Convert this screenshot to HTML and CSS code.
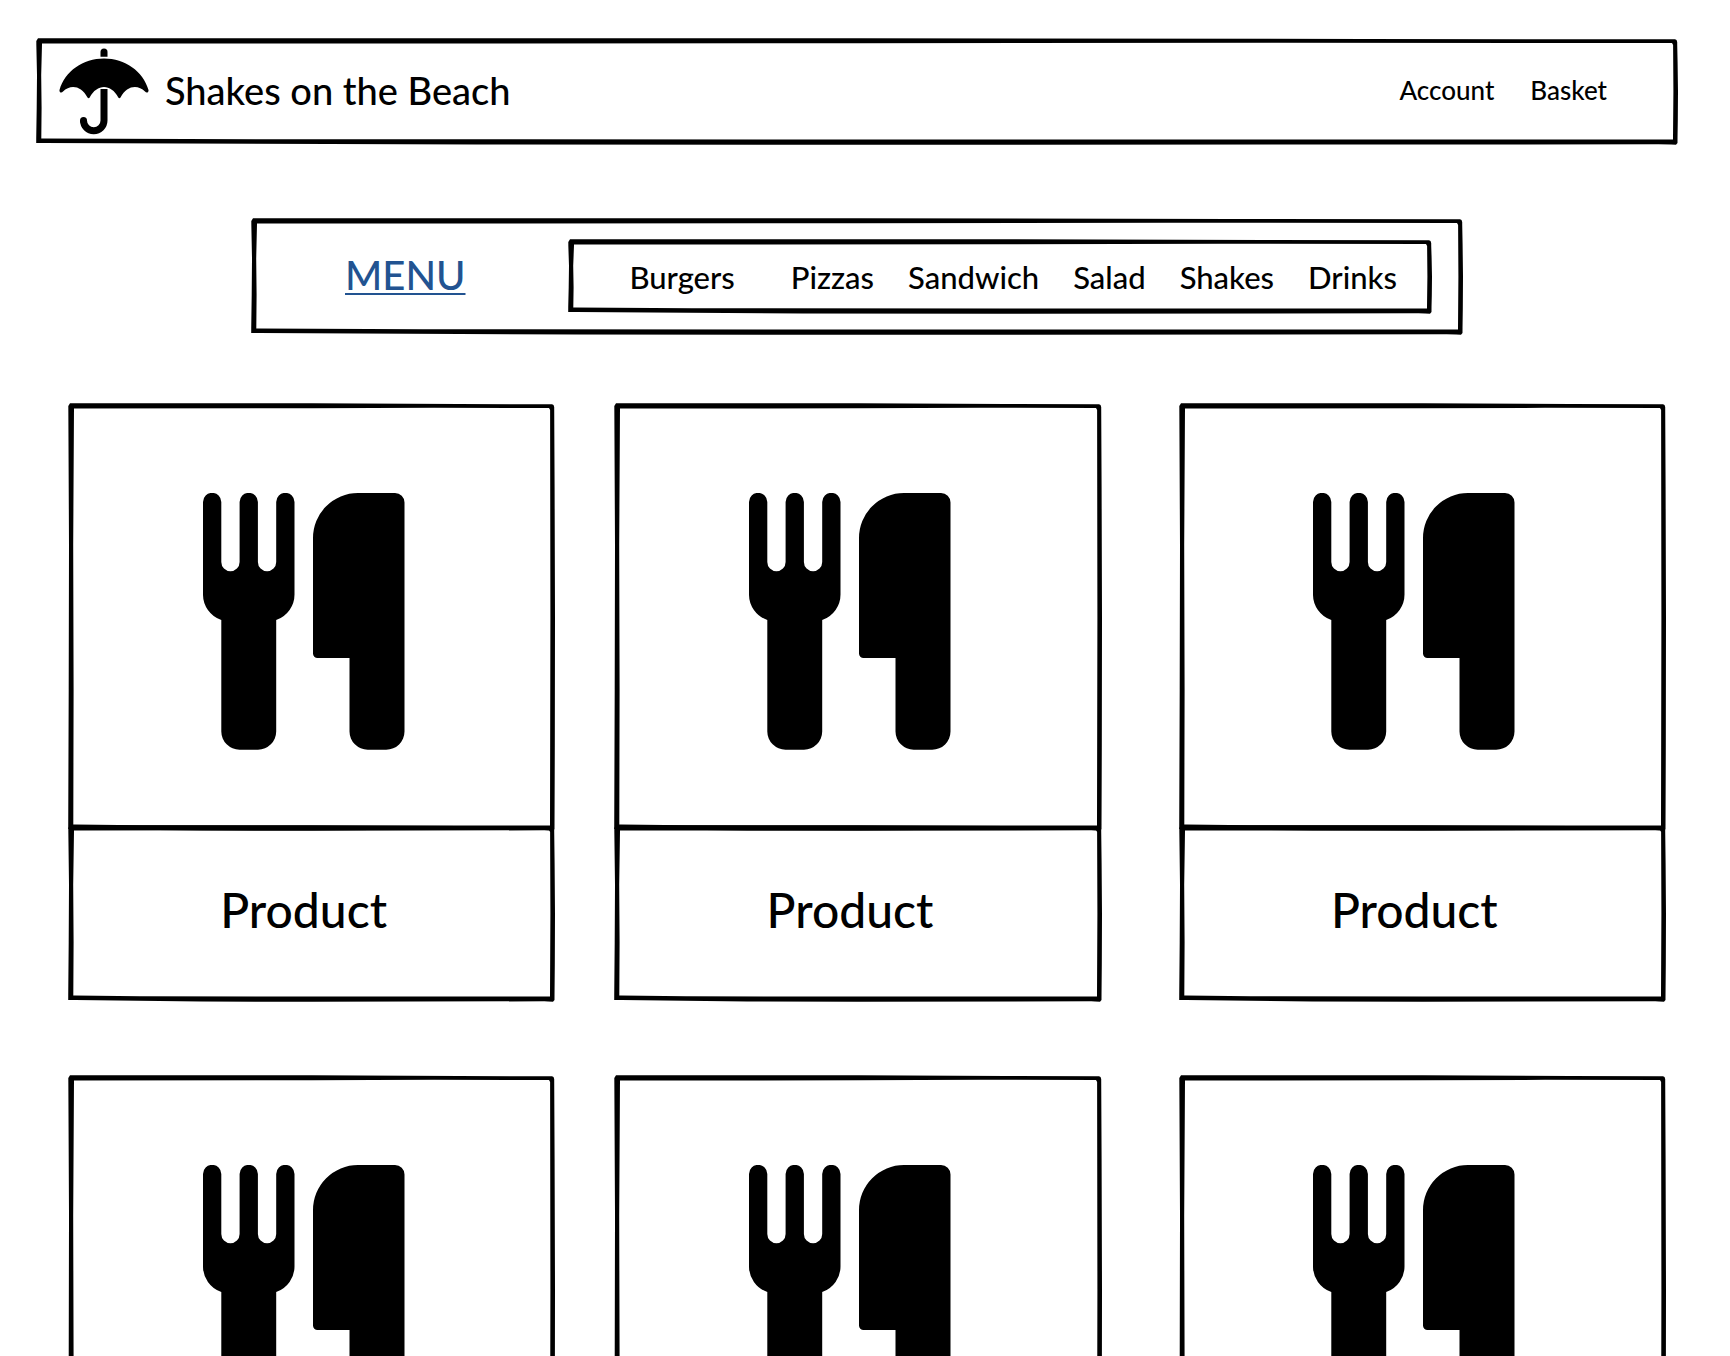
FILE: index.html
```html
<!DOCTYPE html>
<html lang="en">
<head>
<meta charset="utf-8">
<meta name="viewport" content="width=device-width, initial-scale=1">
<title>Shakes on the Beach</title>
<link rel="stylesheet" href="styles.css">
</head>
<body>
<svg class="sprite" aria-hidden="true">
  <symbol id="cutlery" viewBox="0 0 202 257">
    <path d="M0 9a9 9 0 0 1 18.300 0V69a9 9 0 0 0 18.300 0V9a9 9 0 0 1 18.300 0V69a9 9 0 0 0 18.300 0V9a9 9 0 0 1 18.300 0V101A27 27 0 0 1 73.200 127V238.500A18.300 18.300 0 0 1 55 256.700H36.500A18.300 18.300 0 0 1 18.300 238.500V127A27 27 0 0 1 0 101Z"/>
    <path d="M110 45A45 45 0 0 1 155 0H192A9.500 9.500 0 0 1 201.500 9.500V238.500A18.300 18.300 0 0 1 183.200 256.700H164.700A18.300 18.300 0 0 1 146.500 238.500V165H114.500A4.500 4.500 0 0 1 110 160.500Z"/>
  </symbol>
</svg>
<header class="header frame">
  <a class="brand" href="#">
    <svg class="logo" viewBox="0 0 90 88" aria-hidden="true">
      <path d="M41.500 8.700V4a3.500 3.500 0 0 1 7 0V8.700Z"/>
      <path d="M0.500 42C6 23 24 10.500 45 10.500S84 23 89.500 42C90 44.500 87.500 45.500 86 43.500C79 36.500 68 37 61.500 49.500C60.800 50.500 60 50.500 59.300 49.500C52 35.500 38 35.500 30.700 49.500C30 50.500 29.200 50.500 28.500 49.500C22 37 11 36.500 4 43.500C2.500 45.500 0 44.500 0.500 42Z"/>
      <path class="handle" d="M45 41V72.500a10.200 10.200 0 0 1-20.500 0"/>
      <circle cx="24.500" cy="72.500" r="3.500"/>
    </svg>
    <span class="brand-name">Shakes on the Beach</span>
  </a>
  <nav class="account" aria-label="Account">
    <a href="#">Account</a>
    <a href="#">Basket</a>
  </nav>
</header>
<nav class="menu frame" aria-label="Menu">
  <a class="menu-title" href="#">MENU</a>
  <ul class="categories frame">
    <li><a href="#">Burgers</a></li>
    <li><a href="#">Pizzas</a></li>
    <li><a href="#">Sandwich</a></li>
    <li><a href="#">Salad</a></li>
    <li><a href="#">Shakes</a></li>
    <li><a href="#">Drinks</a></li>
  </ul>
</nav>
<main class="products">
  <article class="product"><div class="picture frame"><svg class="cutlery" aria-hidden="true"><use href="#cutlery"/></svg></div><h2 class="name frame">Product</h2></article>
  <article class="product"><div class="picture frame"><svg class="cutlery" aria-hidden="true"><use href="#cutlery"/></svg></div><h2 class="name frame">Product</h2></article>
  <article class="product"><div class="picture frame"><svg class="cutlery" aria-hidden="true"><use href="#cutlery"/></svg></div><h2 class="name frame">Product</h2></article>
  <article class="product"><div class="picture frame"><svg class="cutlery" aria-hidden="true"><use href="#cutlery"/></svg></div></article>
  <article class="product"><div class="picture frame"><svg class="cutlery" aria-hidden="true"><use href="#cutlery"/></svg></div></article>
  <article class="product"><div class="picture frame"><svg class="cutlery" aria-hidden="true"><use href="#cutlery"/></svg></div></article>
</main>
</body>
</html>
```
FILE: styles.css
```css
* {
  box-sizing: border-box;
}

body {
  margin: 0;
  padding: 38px 52px 64px 36px;
  background: #fff;
  color: #000;
  font-family: Lato, "Liberation Sans", sans-serif;
  font-weight: 500;
}

a {
  color: inherit;
  text-decoration: none;
}

.sprite {
  display: none;
}

/* Hand-drawn outline: the edges stretch, their thickness does not. */
.frame {
  border: 7px solid transparent;
  border-image: url("data:image/svg+xml,%3Csvg xmlns='http://www.w3.org/2000/svg' width='400' height='300' viewBox='0 0 400 300'%3E%3Cpath fill-rule='evenodd' d='M0.300 3L2 0.300L200 0.300L320 1L397 1.300Q399 1.500 399.200 4L399.600 60L400 150L399.800 240L399.500 298L398 299.800L390 299.300L200 299.800L110 299.500L0.200 298L0.700 200L1 100ZM6 5.500L200 5.300L300 4.800L394 5L395.100 7L395.400 150L395 294.500L200 294.600L60 294.200L5.300 293.500L5.600 200L5.200 100Z'/%3E%3C/svg%3E") 7 stretch;
}

.header {
  display: flex;
  align-items: center;
  justify-content: space-between;
  min-height: 107px;
  padding: 0 64px 0 16px;
}

.brand {
  display: flex;
  align-items: center;
  gap: 16px;
  font-size: 38px;
}

.brand-name {
  padding-bottom: 4px;
}

.logo {
  width: 90px;
  height: 88px;
}

.handle {
  fill: none;
  stroke: #000;
  stroke-width: 7;
}

.account {
  display: flex;
  gap: 36px;
  padding-bottom: 4px;
  font-size: 26px;
}

.menu {
  display: flex;
  align-items: center;
  justify-content: space-between;
  width: 74%;
  max-width: 1212px;
  min-height: 117px;
  margin: 73px auto 0;
  padding: 0 24px 0 87px;
}

.menu-title {
  padding-bottom: 4px;
  color: #225391;
  font-size: 40px;
  text-decoration: underline 2px;
  text-underline-offset: 3px;
}

.categories {
  display: flex;
  align-items: center;
  justify-content: flex-end;
  gap: 34px;
  width: 864px;
  min-height: 75px;
  margin: 0;
  padding: 0 28px 0 0;
  list-style: none;
  font-size: 31px;
}

.categories li:first-child {
  margin-right: 22px;
}

/* Odd tracks hold the cards, even tracks are the spaces between them. */
.products {
  display: grid;
  grid-template-columns: 487fr 59fr 487fr 77fr 487fr;
  row-gap: 73px;
  margin: 68px 12px 0 32px;
}

.product:nth-child(3n + 1) {
  grid-column: 1;
}

.product:nth-child(3n + 2) {
  grid-column: 3;
}

.product:nth-child(3n) {
  grid-column: 5;
}

.picture {
  display: grid;
  place-items: center;
  height: 428px;
  padding: 8px 16px 0 0;
}

.cutlery {
  width: 202px;
  height: 257px;
}

.name {
  display: grid;
  place-items: center;
  height: 177px;
  margin: -6px 0 0;
  padding: 0 16px 8px 0;
  font-size: 48px;
  font-weight: 500;
}
```
